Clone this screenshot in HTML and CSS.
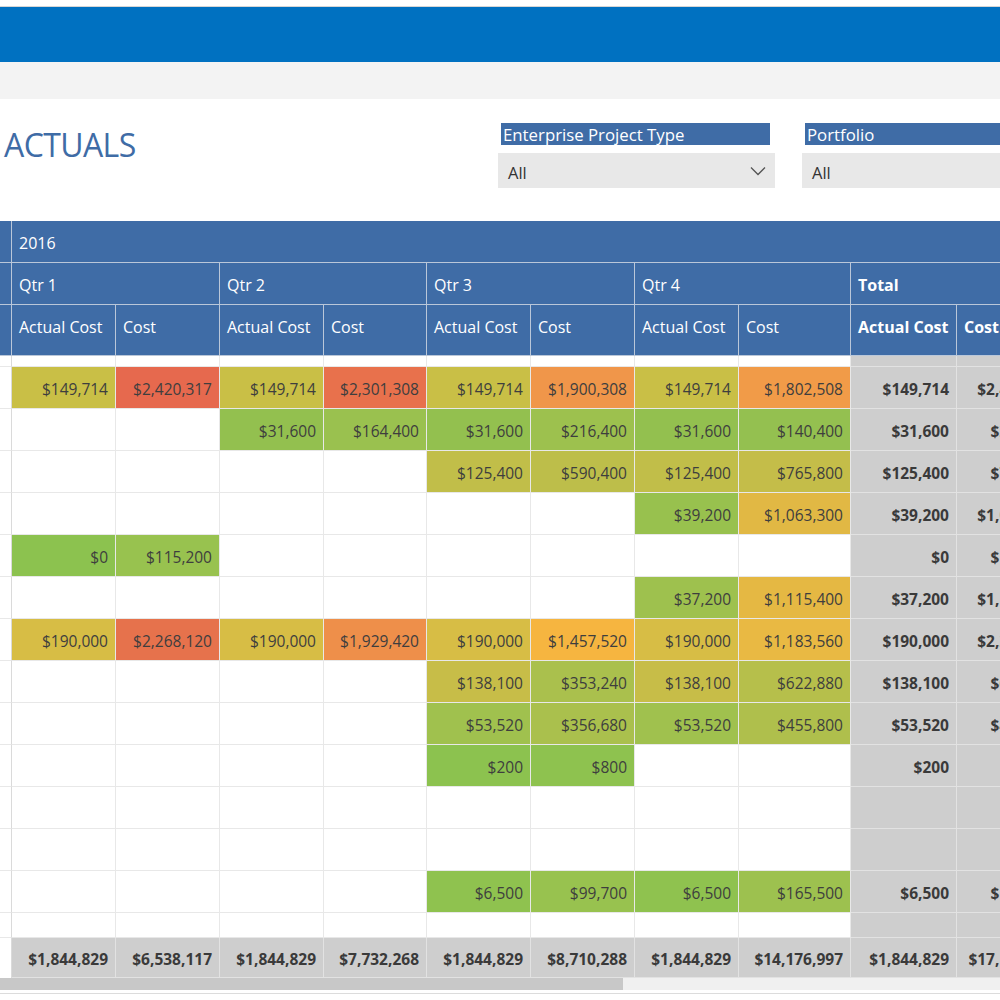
FILE: index.html
```html
<!DOCTYPE html>
<html lang="en">
<head>
<meta charset="utf-8">
<title>Actuals</title>
<link rel="stylesheet" href="styles.css">
</head>
<body>
<div class="topline"></div>
<div class="appbar"></div>
<div class="subbar"></div>
<div class="head">
  <h1 class="title">ACTUALS</h1>
  <div class="filter">
    <div class="filter-label">Enterprise Project Type</div>
    <div class="filter-box"><span>All</span>
      <svg class="chev" width="16" height="10" viewBox="0 0 16 10"><path d="M1 1.5 L8 8.5 L15 1.5" fill="none" stroke="#555" stroke-width="1.3"/></svg>
    </div>
  </div>
  <div class="filter filter-wide">
    <div class="filter-label">Portfolio</div>
    <div class="filter-box"><span>All</span></div>
  </div>
</div>

<div class="grid-wrap">
<div class="matrix">
  <!-- header row 1 -->
  <div class="hc lc"></div>
  <div class="hc year">2016</div>
  <!-- header row 2 -->
  <div class="hc lc"></div>
  <div class="hc q">Qtr 1</div>
  <div class="hc q">Qtr 2</div>
  <div class="hc q">Qtr 3</div>
  <div class="hc q">Qtr 4</div>
  <div class="hc q b">Total</div>
  <!-- header row 3 -->
  <div class="hc lc"></div>
  <div class="hc">Actual Cost</div><div class="hc">Cost</div>
  <div class="hc">Actual Cost</div><div class="hc">Cost</div>
  <div class="hc">Actual Cost</div><div class="hc">Cost</div>
  <div class="hc">Actual Cost</div><div class="hc">Cost</div>
  <div class="hc b">Actual Cost</div><div class="hc b">Cost</div>
  <!-- gap row -->
  <div class="dc lc"></div>
  <div class="dc"></div><div class="dc"></div><div class="dc"></div><div class="dc"></div>
  <div class="dc"></div><div class="dc"></div><div class="dc"></div><div class="dc"></div>
  <div class="dc tc"></div><div class="dc tc"></div>

  <!-- r1 -->
  <div class="dc lc"></div>
  <div class="dc" style="background:#c9bf46">$149,714</div>
  <div class="dc" style="background:#e6694e">$2,420,317</div>
  <div class="dc" style="background:#c9bf46">$149,714</div>
  <div class="dc" style="background:#e8714c">$2,301,308</div>
  <div class="dc" style="background:#c9bf46">$149,714</div>
  <div class="dc" style="background:#f0964a">$1,900,308</div>
  <div class="dc" style="background:#c9bf46">$149,714</div>
  <div class="dc" style="background:#f19b48">$1,802,508</div>
  <div class="dc tc">$149,714</div><div class="dc tc">$2,420,317</div>
  <!-- r2 -->
  <div class="dc lc"></div>
  <div class="dc"></div><div class="dc"></div>
  <div class="dc" style="background:#93c04f">$31,600</div>
  <div class="dc" style="background:#9ac14f">$164,400</div>
  <div class="dc" style="background:#93c04f">$31,600</div>
  <div class="dc" style="background:#9dc14e">$216,400</div>
  <div class="dc" style="background:#93c04f">$31,600</div>
  <div class="dc" style="background:#94c050">$140,400</div>
  <div class="dc tc">$31,600</div><div class="dc tc">$216,400</div>
  <!-- r3 -->
  <div class="dc lc"></div>
  <div class="dc"></div><div class="dc"></div><div class="dc"></div><div class="dc"></div>
  <div class="dc" style="background:#c1be49">$125,400</div>
  <div class="dc" style="background:#bdbe4a">$590,400</div>
  <div class="dc" style="background:#c1be49">$125,400</div>
  <div class="dc" style="background:#c4bd49">$765,800</div>
  <div class="dc tc">$125,400</div><div class="dc tc">$765,800</div>
  <!-- r4 -->
  <div class="dc lc"></div>
  <div class="dc"></div><div class="dc"></div><div class="dc"></div><div class="dc"></div>
  <div class="dc"></div><div class="dc"></div>
  <div class="dc" style="background:#98c14e">$39,200</div>
  <div class="dc" style="background:#e1b844">$1,063,300</div>
  <div class="dc tc">$39,200</div><div class="dc tc">$1,063,300</div>
  <!-- r5 -->
  <div class="dc lc"></div>
  <div class="dc" style="background:#8cc24f">$0</div>
  <div class="dc" style="background:#98c24f">$115,200</div>
  <div class="dc"></div><div class="dc"></div><div class="dc"></div><div class="dc"></div>
  <div class="dc"></div><div class="dc"></div>
  <div class="dc tc">$0</div><div class="dc tc">$115,200</div>
  <!-- r6 -->
  <div class="dc lc"></div>
  <div class="dc"></div><div class="dc"></div><div class="dc"></div><div class="dc"></div>
  <div class="dc"></div><div class="dc"></div>
  <div class="dc" style="background:#9ec14e">$37,200</div>
  <div class="dc" style="background:#e5b843">$1,115,400</div>
  <div class="dc tc">$37,200</div><div class="dc tc">$1,115,400</div>
  <!-- r7 -->
  <div class="dc lc"></div>
  <div class="dc" style="background:#d7bd45">$190,000</div>
  <div class="dc" style="background:#e6724c">$2,268,120</div>
  <div class="dc" style="background:#d7bd45">$190,000</div>
  <div class="dc" style="background:#ee8f4a">$1,929,420</div>
  <div class="dc" style="background:#d7bd45">$190,000</div>
  <div class="dc" style="background:#f6b540">$1,457,520</div>
  <div class="dc" style="background:#d7bd45">$190,000</div>
  <div class="dc" style="background:#e9b943">$1,183,560</div>
  <div class="dc tc">$190,000</div><div class="dc tc">$2,268,120</div>
  <!-- r8 -->
  <div class="dc lc"></div>
  <div class="dc"></div><div class="dc"></div><div class="dc"></div><div class="dc"></div>
  <div class="dc" style="background:#c7bd48">$138,100</div>
  <div class="dc" style="background:#aac04d">$353,240</div>
  <div class="dc" style="background:#c7bd48">$138,100</div>
  <div class="dc" style="background:#b6bf4b">$622,880</div>
  <div class="dc tc">$138,100</div><div class="dc tc">$622,880</div>
  <!-- r9 -->
  <div class="dc lc"></div>
  <div class="dc"></div><div class="dc"></div><div class="dc"></div><div class="dc"></div>
  <div class="dc" style="background:#a0c14e">$53,520</div>
  <div class="dc" style="background:#aac04d">$356,680</div>
  <div class="dc" style="background:#a0c14e">$53,520</div>
  <div class="dc" style="background:#afbf4c">$455,800</div>
  <div class="dc tc">$53,520</div><div class="dc tc">$455,800</div>
  <!-- r10 -->
  <div class="dc lc"></div>
  <div class="dc"></div><div class="dc"></div><div class="dc"></div><div class="dc"></div>
  <div class="dc" style="background:#8cc24f">$200</div>
  <div class="dc" style="background:#8ec24f">$800</div>
  <div class="dc"></div><div class="dc"></div>
  <div class="dc tc">$200</div><div class="dc tc">$800</div>
  <!-- r11 -->
  <div class="dc lc"></div>
  <div class="dc"></div><div class="dc"></div><div class="dc"></div><div class="dc"></div>
  <div class="dc"></div><div class="dc"></div><div class="dc"></div><div class="dc"></div>
  <div class="dc tc"></div><div class="dc tc"></div>
  <!-- r12 -->
  <div class="dc lc"></div>
  <div class="dc"></div><div class="dc"></div><div class="dc"></div><div class="dc"></div>
  <div class="dc"></div><div class="dc"></div><div class="dc"></div><div class="dc"></div>
  <div class="dc tc"></div><div class="dc tc"></div>
  <!-- r13 -->
  <div class="dc lc"></div>
  <div class="dc"></div><div class="dc"></div><div class="dc"></div><div class="dc"></div>
  <div class="dc" style="background:#8fc24f">$6,500</div>
  <div class="dc" style="background:#98c24f">$99,700</div>
  <div class="dc" style="background:#8fc24f">$6,500</div>
  <div class="dc" style="background:#9dc14f">$165,500</div>
  <div class="dc tc">$6,500</div><div class="dc tc">$165,500</div>
  <!-- blank short row -->
  <div class="dc lc"></div>
  <div class="dc"></div><div class="dc"></div><div class="dc"></div><div class="dc"></div>
  <div class="dc"></div><div class="dc"></div><div class="dc"></div><div class="dc"></div>
  <div class="dc tc"></div><div class="dc tc"></div>
  <!-- totals -->
  <div class="dc lc last"></div>
  <div class="dc tot">$1,844,829</div>
  <div class="dc tot">$6,538,117</div>
  <div class="dc tot">$1,844,829</div>
  <div class="dc tot">$7,732,268</div>
  <div class="dc tot">$1,844,829</div>
  <div class="dc tot">$8,710,288</div>
  <div class="dc tot">$1,844,829</div>
  <div class="dc tot">$14,176,997</div>
  <div class="dc tot">$1,844,829</div>
  <div class="dc tot">$17,158,670</div>
</div>
</div>
<div class="hscroll"><div class="thumb"></div></div>
<div class="bottomline"></div>
</body>
</html>
```

FILE: styles.css
```css
html, body {
  margin: 0;
  padding: 0;
  overflow: hidden;
  background: #ffffff;
}
body {
  width: 1000px;
  height: 1000px;
  font-family: "Open Sans", "Noto Sans", sans-serif;
  color: #333333;
}
.topline {
  height: 6px;
  border-bottom: 1px solid #d6d6d6;
}
.appbar {
  height: 55px;
  background: #0071c1;
}
.subbar {
  height: 37px;
  background: #f3f3f3;
}
.head {
  height: 122px;
  display: flex;
  overflow: hidden;
}
.title {
  flex: 0 0 498px;
  box-sizing: border-box;
  margin: 0;
  padding: 27px 0 0 4px;
  font-size: 32px;
  font-weight: 400;
  line-height: 38px;
  color: #3f6ca6;
  letter-spacing: -0.6px;
}
.filter {
  flex: 0 0 277px;
  margin-right: 27px;
  padding-top: 24px;
}
.filter-wide {
  flex: 0 0 300px;
  margin-right: 0;
}
.filter-label {
  box-sizing: border-box;
  margin: 0 5px 0 3px;
  height: 22px;
  background: #3f6ca6;
  color: #ffffff;
  font-size: 16.8px;
  line-height: 22px;
  padding: 1px 0 0 2px;
  white-space: nowrap;
  overflow: hidden;
}
.filter-box {
  box-sizing: border-box;
  margin-top: 8px;
  height: 35px;
  background: #e8e8e8;
  display: flex;
  align-items: center;
  justify-content: space-between;
  padding: 3px 9px 0 10px;
  font-size: 16.5px;
  color: #333333;
}
.chev {
  display: block;
  margin-top: -3px;
}
.grid-wrap {
  width: 1000px;
  overflow: hidden;
}
.matrix {
  display: grid;
  width: 1065px;
  grid-template-columns: 12px 104px 104px 104px 103px 104px 104px 104px 112px 106px 108px;
  grid-template-rows: 42px 42px 51px 11px repeat(13, 42px) 25px 40px;
  font-size: 15.5px;
}
.hc {
  box-sizing: border-box;
  background: #3f6ca6;
  color: #ffffff;
  border-right: 1px solid #bac7d9;
  border-bottom: 1px solid #bac7d9;
  padding: 11px 7px 0 7px;
  font-size: 16px;
  line-height: 22px;
  white-space: nowrap;
  overflow: hidden;
}
.hc.lc {
  padding: 0;
}
.year {
  grid-column: 2 / -1;
}
.q {
  grid-column: span 2;
}
.b {
  font-weight: 700;
}
.dc {
  box-sizing: border-box;
  background: #ffffff;
  border-right: 1px solid #e8e8e8;
  border-bottom: 1px solid #e8e8e8;
  display: flex;
  align-items: center;
  justify-content: flex-end;
  padding: 3px 7px 0 0;
  color: #3e3e3e;
  white-space: nowrap;
  overflow: hidden;
}
.dc.lc {
  padding: 0;
  border-right: 1px solid #dadada;
}
.dc.lc.last {
  border-bottom: none;
}
.tc, .tot {
  background: #cecece;
  border-right-color: #e2e2e2;
  border-bottom-color: #e2e2e2;
  font-weight: 700;
  color: #3a3a3a;
}
.hscroll {
  height: 12px;
  background: #f0f0f0;
  display: flex;
}
.thumb {
  width: 623px;
  background: #c8c8c8;
}
.bottomline {
  margin-top: 3px;
  height: 1px;
  background: #dcdcdc;
}
```
